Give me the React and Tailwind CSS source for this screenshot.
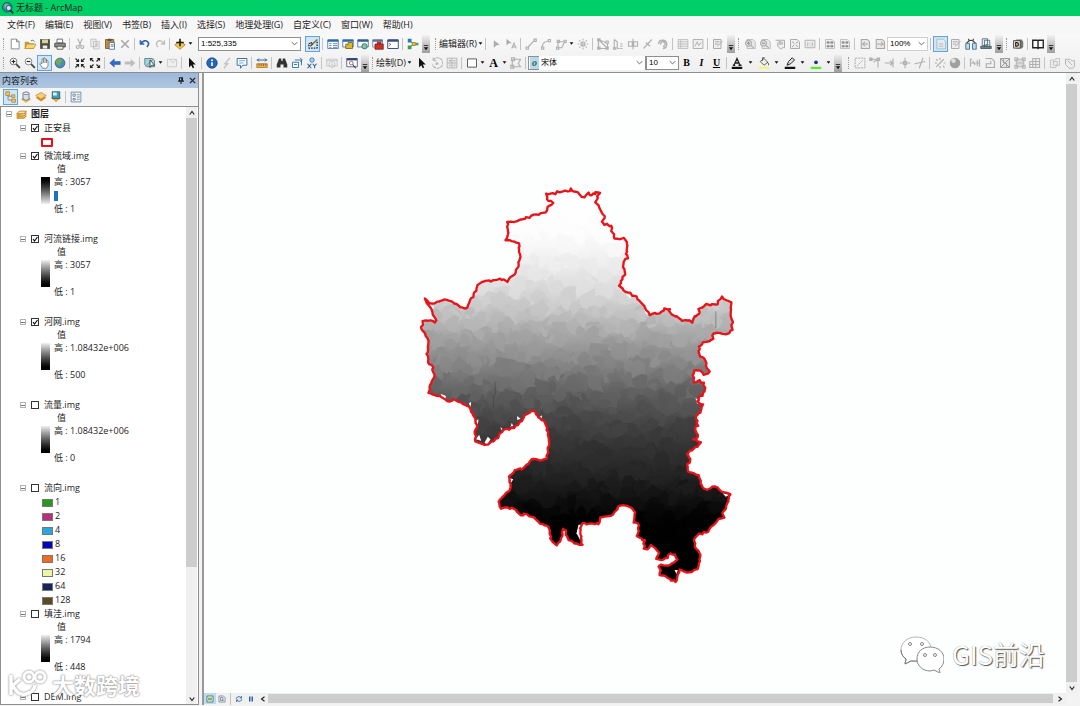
import { useState } from "react";
import clsx from "clsx";

const MENUS = ["文件(F)", "编辑(E)", "视图(V)", "书签(B)", "插入(I)", "选择(S)", "地理处理(G)", "自定义(C)", "窗口(W)", "帮助(H)"];

const LAYERS = [
  { name: "正安县", checked: true, kind: "outline" },
  { name: "微流域.img", checked: true, kind: "stretch", high: "3057", low: "1", inverted: true },
  { name: "河流链接.img", checked: true, kind: "stretch", high: "3057", low: "1" },
  { name: "河网.img", checked: true, kind: "stretch", high: "1.08432e+006", low: "500" },
  { name: "流量.img", checked: false, kind: "stretch", high: "1.08432e+006", low: "0" },
  {
    name: "流向.img",
    checked: false,
    kind: "classes",
    classes: [
      ["1", "bg-[#259a1f]"],
      ["2", "bg-[#b8307c]"],
      ["4", "bg-[#27a8dc]"],
      ["8", "bg-[#0505b8]"],
      ["16", "bg-[#f26b1d]"],
      ["32", "bg-[#ebf7a4]"],
      ["64", "bg-[#17245c]"],
      ["128", "bg-[#5e4a22]"],
    ],
  },
  { name: "填洼.img", checked: false, kind: "stretch", high: "1794", low: "448" },
  { name: "DEM.img", checked: false, kind: "none" },
];

const S = { fill: "none", stroke: "#b0b0b0", strokeWidth: 1.5 };
const D = { fill: "none", stroke: "#222", strokeWidth: 1.5 };

// all glyphs are drawn on a 16x16 grid
const GLYPHS = {
  newDoc: <path d="M3 1.500h7l3.500 3.500v9.500H3zM10 1.500V5h3.500" fill="#fff" stroke="#5f6f7f" />,
  open: (
    <>
      <path d="M1 14V5h5l1.500 2H13v7z" fill="#c99a35" />
      <path d="M1 14l3-6h12l-3 6z" fill="#f7d673" stroke="#a77a20" strokeWidth=".8" />
      <path d="M9 4q3-3 5 1" fill="none" stroke="#3c79b8" strokeWidth="1.300" />
    </>
  ),
  save: (
    <>
      <path d="M1.500 1.500h13v13h-13z" fill="#4d4a3f" />
      <path d="M4 2h8v5H4z" fill="#d8cf9a" />
      <path d="M5 10h6v4H5z" fill="#eee" />
    </>
  ),
  print: (
    <>
      <path d="M4 1.500h7l1 5H4z" fill="#fff" stroke="#444" />
      <path d="M1 7h14v5H1z" fill="#8a8f94" stroke="#333" />
      <path d="M4 11h8v4H4z" fill="#f3efcf" stroke="#444" />
    </>
  ),
  cut: <path d="M5 1l4 9M11 1L7 10M5 10a2 2 0 1 0 .1 0M11 10a2 2 0 1 0 .1 0" {...S} />,
  copy: <path d="M2.500 1.500h7v10h-7zM6 4.500h7.500v10H6zM8 8h4M8 10.500h4" fill="#eee" stroke="#b5b5b5" />,
  paste: (
    <>
      <path d="M2 2h11v12H2z" fill="#c08a3e" stroke="#6d4a18" />
      <path d="M5 1h5v3H5z" fill="#555" />
      <path d="M7 6h7v9H7z" fill="#fff" stroke="#3a5f96" />
      <path d="M9 9h4M9 11h4" stroke="#3a5f96" />
    </>
  ),
  del: <path d="M3 3l10 10M13 3L3 13" fill="none" stroke="#a9a9a9" strokeWidth="2.200" />,
  undo: <path d="M2 3v5h5M2.500 7.500q5-6 9-2.500 3 3-1 7" fill="none" stroke="#2f63ad" strokeWidth="2.200" />,
  redo: <path d="M14 3v5H9M13.500 7.500q-5-6-9-2.500-3 3 1 7" fill="none" stroke="#bdbdbd" strokeWidth="1.800" />,
  addData: (
    <>
      <path d="M8 4l7 5-7 6-7-6z" fill="#f2c74c" stroke="#a8761a" />
      <path d="M8 1v10M3 6h10" stroke="#222" strokeWidth="2.200" />
    </>
  ),
  edit: (
    <>
      <path d="M2 13.500h12M2.500 9v4M13.500 5v8" stroke="#222" strokeWidth="1.800" strokeDasharray="2 1.500" />
      <path d="M6 9l8-7" stroke="#a06a20" strokeWidth="2.200" fill="none" />
      <path d="M2 8l4-2 1 3-3 2" fill="none" stroke="#222" strokeWidth="1.300" />
    </>
  ),
  table: (
    <>
      <path d="M1 2.500h14v11.500H1z" fill="#fff" stroke="#2f66ac" />
      <path d="M1 2h14v3H1z" fill="#2f66ac" />
      <path d="M3 7.500h3M3 10h3M3 12.500h3M8 7.500h6M8 10h6M8 12.500h6" stroke="#3d6ea8" />
    </>
  ),
  catalog: (
    <>
      <path d="M1 2.500h14v9.500H1z" fill="#fff" stroke="#2f66ac" />
      <path d="M1 2h14v3H1z" fill="#2f66ac" />
      <path d="M5 14V8l3 1V6h6v8z" fill="#d9bb2e" stroke="#6b5b10" />
    </>
  ),
  search: (
    <>
      <path d="M1 2.500h14v9.500H1z" fill="#fff" stroke="#2f5f90" />
      <path d="M1 2h14v3H1z" fill="#2f5f90" />
      <circle cx="10" cy="11" r="3.500" fill="#7fc5a0" stroke="#2c7a78" strokeWidth="1.300" />
    </>
  ),
  toolbox: (
    <>
      <path d="M1 2.500h13v9.500H1z" fill="#fff" stroke="#5a6f95" />
      <path d="M1 2h13v3H1z" fill="#5a6f95" />
      <path d="M4 8h11v7H4zM7 8V5.500h5V8" fill="#c83228" stroke="#7d1712" />
    </>
  ),
  python: (
    <>
      <path d="M1 2.500h14v11.500H1z" fill="#fff" stroke="#3a4f7c" strokeWidth="1.300" />
      <path d="M1 2h14v3H1z" fill="#3a4f7c" />
      <path d="M3 7l2 1.500L3 10" fill="none" stroke="#333" />
    </>
  ),
  model: (
    <>
      <path d="M4 4l5 4-5 4M9 8h4" fill="none" stroke="#444" />
      <path d="M1 1h5v5H1z" fill="#2d79b8" />
      <path d="M1 10h5v5H1z" fill="#38a04c" />
      <path d="M7 6h4v4H7z" fill="#f0cc39" stroke="#8c7112" />
      <circle cx="13.500" cy="8" r="2" fill="#45a75a" />
    </>
  ),
  pointerGray: <path d="M5 3v10l3-3 5-1z" fill="#aaa" />,
  pointerA: (
    <>
      <path d="M2 1v9l3-3h4z" fill="#aaa" />
      <path d="M9 14l3-7 3 7M10 12h4" {...S} />
    </>
  ),
  line: <path d="M4 12L12 4M1.500 12h3v3h-3zM12 1.500h3v3h-3z" {...S} />,
  arc: <path d="M3 12q0-7 8-8M2 12h3v3H2zM11 2h3v3h-3z" {...S} />,
  trace: <path d="M4 13V5h8M4 13h5l4-8M2 12h3v3H2zM3 3h3v3H3zM12 3h3v3h-3z" {...S} />,
  burst: <path d="M8 1v14M1 8h14M3 3l10 10M13 3L3 13M6 6h4v4H6z" {...S} strokeDasharray="2 1" />,
  poly: <path d="M2 2v12h12V7L2 2l12 12M1 1h3v3H1zM12 4h3v3h-3zM1 12h3v3H1zM12 12h3v3h-3z" {...S} />,
  steps: <path d="M3 2v12M7 5v9M3 2l4 3M7 14h3M11 8h3M11 11h3M11 14h3M2 13h3v2H2z" {...S} />,
  split: <path d="M8 1v14M2 5h5v6H2zM9 5h5v6H9z" {...S} />,
  slash: <path d="M2 14L13 2M5 6l6 5" {...S} />,
  rotate: <path d="M2 8a5.500 5.500 0 1 1 6 6M8 14l3-2M5 9a3 3 0 1 1 3 2" {...S} strokeWidth="1.800" />,
  grid: <path d="M1.500 2h13v12h-13zM1.500 5h13M1.500 8h13M1.500 11h13M5 2v12" fill="#eee" stroke="#b5b5b5" />,
  sketch: <path d="M1.500 2h13v12h-13zM4 11l3-6 2 5 3-4" fill="#f0f0f0" stroke="#aaa" strokeWidth="1.200" />,
  note: <path d="M2 2h10v12H2zM4 5h6M4 8h4M7 11l7-7" fill="#eee" stroke="#aaa" strokeWidth="1.300" />,
  pageZoom: (
    <>
      <path d="M4 2h8l3 3v9H4z" fill="#e8e8e8" stroke="#b0b0b0" />
      <circle cx="6" cy="7" r="4" fill="#ddd" stroke="#a0a0a0" strokeWidth="1.300" />
      <path d="M4 7h4M6 5v4M9 10l4 3" stroke="#909090" strokeWidth="1.300" />
    </>
  ),
  pageOut: (
    <>
      <path d="M4 2h8l3 3v9H4z" fill="#e8e8e8" stroke="#b0b0b0" />
      <circle cx="6" cy="7" r="4" fill="#ddd" stroke="#a0a0a0" strokeWidth="1.300" />
      <path d="M4 7h4M9 10l4 3" stroke="#909090" strokeWidth="1.300" />
    </>
  ),
  pageHand: <path d="M2 3h12v10h-3l-2 2-4-4V6M7 9V4M9 9V4M11 9V5" fill="#eee" stroke="#aaa" strokeWidth="1.300" />,
  pageFull: <path d="M2 2h9l3 3v9H2zM4 5l3 2M12 5L9 7M4 12l3-3M12 12L9 9" fill="#eee" stroke="#aaa" strokeWidth="1.300" />,
  pageOne: <path d="M1.500 3h13v10h-13zM5 6v5M8 7v1M8 10v1M11 6v5" fill="#eee" stroke="#b0b0b0" strokeWidth="1.300" />,
  pageIn: (
    <>
      <path d="M2 2h9l3 3v9H2z" fill="#eee" stroke="#b0b0b0" />
      <path d="M4 5h3v2H4zM9 5h3v2H9zM4 10h3v2H4zM9 10h3v2H9z" fill="#888" stroke="#999" />
    </>
  ),
  pageLeft: <path d="M3 2h8l3 3v9H3zM12 8H5l3-3M5 8l3 3" fill="#e8e8e8" stroke="#a8a8a8" strokeWidth="1.400" />,
  pageRight: <path d="M3 2h8l3 3v9H3zM4 8h8L9 5M12 8l-3 3" fill="#e8e8e8" stroke="#a8a8a8" strokeWidth="1.400" />,
  frame: <path d="M2.500 1.500H11l3 3v10H2.500zM5 8h6M5 11h6" fill="#e4ebf0" stroke="#a1adb5" />,
  frames: (
    <>
      <path d="M5 3V1M11 3V1M2 7q6-8 12 0" fill="none" stroke="#333" strokeWidth="1.500" />
      <path d="M1 7h5v8H1zM10 7h5v8h-5z" fill="#b9daf0" stroke="#2d587d" />
    </>
  ),
  pages: (
    <>
      <path d="M3 1h7v9H3zM6 3h7v9H6z" fill="#e7eef8" stroke="#3f5876" />
      <path d="M1 11h14v3H1z" fill="#6e7f8c" stroke="#3f4b55" />
      <path d="M7 8h5l-3 3z" fill="#55a34b" />
    </>
  ),
  cube: (
    <>
      <path d="M3 4l3-2h7l2 3v7l-2 2H6l-3-3z" fill="#777" />
      <path d="M2 3.500h9v10H2z" fill="#e4dfc9" stroke="#333" />
      <path d="M5 6v5h1.500q2-.5 2-2.500T6.500 6z" fill="none" stroke="#111" strokeWidth="1.500" />
    </>
  ),
  book: <path d="M1 3h6l1 1 1-1h6v10H9l-1 1-1-1H1zM8 4v10" fill="#fff" stroke="#222" strokeWidth="1.800" />,
  zoomIn: (
    <>
      <circle cx="6" cy="6" r="4.500" fill="#fff" stroke="#777" strokeWidth="1.300" />
      <path d="M3.500 6h5M6 3.500v5" stroke="#222" strokeWidth="1.600" />
      <path d="M9.500 9.500l5 5" stroke="#4a4a4a" strokeWidth="2.500" />
    </>
  ),
  zoomOut: (
    <>
      <circle cx="6" cy="6" r="4.500" fill="#fff" stroke="#888" strokeWidth="1.300" />
      <path d="M3.500 6h5" stroke="#222" strokeWidth="1.600" />
      <path d="M9.500 9.500l5 5" stroke="#4a4a4a" strokeWidth="2.500" />
    </>
  ),
  hand: <path d="M5 15l-4-6q1-2 3 0V3q1.500-1 2 0V1.500q1.500-1 2 0V3q1.500-1 2 0v2q2-1 2 1v6l-2 3zM6 3v5M8 3v5M10 4v4" fill="#fff" stroke="#666" />,
  globe: (
    <>
      <circle cx="8" cy="8" r="6.500" fill="#4a8cc4" stroke="#29527d" />
      <path d="M5 2q5 0 7 3l-3 2-1 4-4-1-2-4z" fill="#6fae52" />
    </>
  ),
  shrink: <path d="M2 2l4 4M3 6h3V3M14 2l-4 4M10 3v3h3M2 14l4-4M3 10h3v3M14 14l-4-4M13 10h-3v3" {...D} />,
  expand: <path d="M6 6L2 2M2 5V2h3M10 6l4-4M11 2h3v3M6 10l-4 4M2 11v3h3M10 10l4 4M14 11v3h-3" {...D} />,
  back: <path d="M1 8l6-5.500v3.500h8v4H7v3.500z" fill="#2f6bc4" stroke="#1e4b95" strokeWidth=".6" />,
  forward: <path d="M15 8L9 2.500V6H1v4h8v3.500z" fill="#bdbdbd" />,
  select: (
    <>
      <path d="M1 2h10l3 3v8H4L1 10z" fill="#a5d6dd" stroke="#3b7077" />
      <path d="M2 13L13 2" stroke="#777" />
      <path d="M8 4v10l2-3h4z" fill="#fff" stroke="#222" />
    </>
  ),
  clear: <path d="M2 3h12v10H2zM5 3l4 5 4-5" fill="#efefef" stroke="#c2c2c2" />,
  pointer: <path d="M4 1v13l3-3 2 4 2-1-2-4h4z" fill="#111" />,
  info: (
    <>
      <circle cx="8" cy="8" r="7" fill="#2465b5" stroke="#154785" />
      <path d="M8 7v5" stroke="#fff" strokeWidth="2.200" />
      <circle cx="8" cy="4.300" r="1.300" fill="#fff" />
    </>
  ),
  bolt: <path d="M12 1L5 9h4l-5 6" fill="none" stroke="#c4c4c4" strokeWidth="1.800" />,
  html: (
    <>
      <path d="M1.500 2h13v9H9l-3 4v-4H1.500z" fill="#fff" stroke="#37709c" strokeWidth="1.300" />
      <path d="M4 5h8M4 8h6" stroke="#4c8cba" />
    </>
  ),
  measure: (
    <>
      <path d="M1 4h14M4 2L2 4l2 2M12 2l2 2-2 2" fill="none" stroke="#2761a8" strokeWidth="1.300" />
      <path d="M1 9h14v5H1z" fill="#edb14c" stroke="#a8701c" />
      <path d="M4 9v3M7 9v3M10 9v3M13 9v3" stroke="#7d5417" />
    </>
  ),
  binoculars: <path d="M4 2h3v3h2V2h3l3 8v4h-5v-4H6v4H1v-4z" fill="#333" />,
  route: (
    <>
      <path d="M2 7h8v7H2z" fill="#fff" stroke="#3577b5" strokeWidth="1.300" />
      <path d="M5 4h9v7" fill="none" stroke="#3577b5" strokeWidth="1.300" />
      <path d="M12 1l3 3-3 2M4 10h4" fill="none" stroke="#3577b5" strokeWidth="1.300" />
    </>
  ),
  goXY: (
    <>
      <circle cx="8" cy="4" r="3" fill="#9fd0ee" stroke="#2f78b2" />
      <path d="M2 9l5 6M7 9l-5 6M9 9l2.500 3L14 9M11.500 12v3" fill="none" stroke="#255f97" strokeWidth="1.400" />
    </>
  ),
  clock: <path d="M1 3h14v9H1zM1 5h14M8 6a4 4 0 1 0 .1 0M8 8v3h2" fill="#eee" stroke="#bdbdbd" />,
  viewer: (
    <>
      <path d="M1 2h14v11H1z" fill="#fff" stroke="#30486b" />
      <path d="M1 1.500h14v3H1z" fill="#30486b" />
      <circle cx="7" cy="8" r="2.500" fill="none" stroke="#9a3b3b" />
      <path d="M9 10l4 5" stroke="#333" strokeWidth="1.500" />
    </>
  ),
  turn: <path d="M3 4a7 7 0 1 1-1 6M3 1v4h4M7 8h2v2H7z" {...S} strokeDasharray="4 1" />,
  nudge: <path d="M1.500 1.500h13v13h-13zM8 2v12M2 8h12M4 5h3M5.500 3.500v3M10 5h3M4 11h3M10 11h3" fill="#e8e8e8" stroke="#a8a8a8" />,
  rect: <path d="M2 2.500h12v11H2z" fill="#fff" stroke="#333" />,
  editVertex: <path d="M4 3h10l-3 6 3 4H3V7zM2 1h4v4H2zM1 11h4v4H1z" {...S} />,
  bucket: (
    <>
      <path d="M3 6l5-4 5 5-5 4z" fill="#f2f2e8" stroke="#333" />
      <path d="M12 7q3 1 2 4M6 5V1h3" fill="none" stroke="#333" />
      <path d="M1 13h14v3H1z" fill="#f6f08a" />
    </>
  ),
  pen: (
    <>
      <path d="M4 11l2-5 5-5 3 3-5 5z" fill="#ddd" stroke="#222" strokeWidth="1.300" />
      <path d="M1 13h14v3H1z" fill="#111" />
    </>
  ),
  marker: (
    <>
      <circle cx="8" cy="7" r="2.500" fill="#1c2d9c" />
      <path d="M1 13h14v3H1z" fill="#5bee1e" />
    </>
  ),
  fontColor: (
    <>
      <path d="M4 11L8 2l4 9M5.500 8h5M2.500 11h3M10 11h4" fill="none" stroke="#222" strokeWidth="1.700" />
      <path d="M1 13h14v3H1z" fill="#111" />
    </>
  ),
  dashBox: <path d="M1.500 1.500h13v13h-13zM4 12l8-8" fill="#f2f2f2" stroke="#aaa" strokeWidth="1.200" strokeDasharray="3 1" />,
  corner: <path d="M2 3h10v11M6 7l6-4M1 1.500h3v3H1zM11 1.500h3v3h-3z" {...S} />,
  extend: <path d="M1 8h11M12 2v12M8 5l4 3-4 3" {...S} />,
  cross: <path d="M8 1v14M1 8h14M6 6h4v4H6z" {...S} />,
  trim: <path d="M1 9l14-3M12 1L7 15" {...S} />,
  spark: <path d="M3 13L13 3M3 3l2 2M8 1v3M13 8h2M8 12v3M12 12l2 2M1 8h3" {...S} />,
  ball: (
    <>
      <circle cx="8" cy="8" r="7" fill="#a0a0a0" />
      <circle cx="6" cy="5" r="3" fill="#dedede" />
    </>
  ),
  align: <path d="M2 3v10M14 3v10M2 8h12M5 5l3 6M11 4v8M1 3h3" {...S} />,
  reshape: <path d="M2 2h8l4 4v8H3V9h5q3-1 0-4" fill="#eee" stroke="#aaa" strokeWidth="1.400" />,
  fixTopo: <path d="M2 2h12v12H2zM2 2l12 12M14 2L2 14M6 3v5M10 8v5" fill="#e4e4e4" stroke="#9e9e9e" strokeWidth="1.300" />,
  nodes: <path d="M3 3h10v10H3zM1 1h4v4H1zM11 1h4v4h-4zM1 11h4v4H1zM11 11h4v4h-4zM3 8h10" fill="#ddd" stroke="#aaa" />,
  mesh: <path d="M5 2h9v12H5zM1 6h13M1 10h13M9 2v12M1 6v8h4" {...S} />,
  blob: <path d="M2 4h6l1-2h5v9h-4l-1 3H2zM6 6h5v5H6z" fill="#eee" stroke="#b5b5b5" />,
  union: <path d="M2 3h6l2 2h4v8l-3 2H7l-5-5zM5 5l6 6" fill="#eee" stroke="#b5b5b5" strokeWidth="1.300" />,
  layers: (
    <>
      <path d="M1 7l4-4h10v8l-3 3H1z" fill="#e3a93d" />
      <path d="M1 7l4-4h10l-3 4zM1 10h11l3-4M1 13h11l3-3" fill="#fbe09a" stroke="#a16f17" />
    </>
  ),
  byOrder: (
    <>
      <path d="M4 4v8h6M4 7h6" fill="none" stroke="#777" />
      <path d="M1 1h5v5H1zM9 5h4v4H9zM9 11h5v4H9z" fill="#edc56c" stroke="#ae812e" />
    </>
  ),
  bySource: (
    <>
      <path d="M8 6l7 5-7 5-7-5z" fill="#f0be57" />
      <path d="M4 3q4-3 8 0v8q-4 3-8 0z" fill="#d5dfec" stroke="#53647b" />
      <ellipse cx="8" cy="3" rx="4" ry="1.600" fill="#fff" stroke="#53647b" />
    </>
  ),
  byVisible: (
    <>
      <path d="M1 9l7 5 7-5-7-4z" fill="#d98d2b" />
      <path d="M1 6l7 5 7-5-7-4z" fill="#f7cf79" stroke="#a87321" strokeWidth=".8" />
    </>
  ),
  bySelect: (
    <>
      <path d="M1 9l7 6 7-6-7-4z" fill="#e6a945" />
      <path d="M3 1h10v9H3z" fill="#39a3b5" stroke="#264d66" />
      <path d="M4 2h5v4H4z" fill="#d8f0f5" />
    </>
  ),
  options: <path d="M1.500 1.500h13v13h-13zM4 4h3v3H4zM4 10h3v2H4zM9 5h4M9 8h4M9 11h4" fill="#f5f8fc" stroke="#56718e" />,
  app: (
    <>
      <circle cx="7" cy="7" r="6.500" fill="#3b83a8" stroke="#1e4c67" />
      <path d="M3 4q4-3 6 0l-1 4-4 1z" fill="#7dc386" />
      <circle cx="9" cy="8" r="3.500" fill="#c6e8ec" stroke="#21495a" strokeWidth="1.200" />
      <path d="M11 11l4 4" stroke="#21374c" strokeWidth="2.400" />
    </>
  ),
  refresh: <path d="M2 8q1-5 7-5l4 3M13 2v4H9M14 8q-1 5-7 5l-4-3M3 14v-4h4" fill="none" stroke="#3569a8" strokeWidth="1.700" />,
  pause: <path d="M4 3h3v10H4zM9 3h3v10H9z" fill="#2c63ae" />,
  dataView: (
    <>
      <path d="M2 2h12v12H2z" fill="#fff" stroke="#3b5a4a" strokeWidth="1.500" />
      <path d="M4 5h8v6H4z" fill="#86b35c" />
    </>
  ),
  layoutView: <path d="M2 2h9l3 3v9H2zM5 5h5v6H5zM7 8l4 3" fill="#fff" stroke="#4b6179" strokeWidth="1.300" />,
};

function Glyph({ name, className = "size-3" }) {
  return (
    <svg viewBox="0 0 16 16" className={clsx("shrink-0", className)} aria-hidden="true">
      {GLYPHS[name]}
    </svg>
  );
}

function Tool({ name, active, children }) {
  return (
    <button
      type="button"
      aria-label={name}
      className={clsx(
        "flex h-4 w-[15px] shrink-0 items-center justify-center text-[9px] text-black",
        active && "bg-[#cfe5f8] outline outline-1 -outline-offset-1 outline-[#62a5de]"
      )}
    >
      {children || <Glyph name={name} />}
    </button>
  );
}

function Caret() {
  return (
    <svg viewBox="0 0 8 8" className="mx-px w-[5px] shrink-0" aria-hidden="true">
      <path d="M1 2h6L4 6z" fill="#111" />
    </svg>
  );
}

function Sep() {
  return <span className="mx-[2px] h-3 w-px shrink-0 bg-[#c3c3c3]" />;
}

function Grip() {
  return <span className="mr-[3px] ml-[3px] h-3 w-px shrink-0 border-l border-dotted border-[#999]" />;
}

function Overflow() {
  return (
    <button
      type="button"
      aria-label="工具栏选项"
      className="ml-[2px] flex h-[18px] w-2 shrink-0 items-end justify-center bg-linear-to-b from-[#f3f3f3] to-[#9e9e9e] pb-[2px]"
    >
      <svg viewBox="0 0 8 8" className="w-[6px]">
        <path d="M1 0h6v1H1zM1 3h6L4 7z" fill="#111" />
      </svg>
    </button>
  );
}

function Combo({ label, options, className, disabled }) {
  return (
    <span className={clsx("relative flex h-[14px] shrink-0 items-center border border-[#8f8f8f] bg-white", className)}>
      <select
        aria-label={label}
        disabled={disabled}
        className="h-full w-full appearance-none bg-transparent pl-[2px] font-['Liberation_Sans','Noto_Sans_CJK_SC',sans-serif] text-[8px] leading-3 text-black outline-none disabled:opacity-100"
      >
        {options.map((o) => (
          <option key={o}>{o}</option>
        ))}
      </select>
      <svg viewBox="0 0 10 10" className="pointer-events-none absolute right-[2px] w-[7px]">
        <path d="M1 3l4 4 4-4" fill="none" stroke="#666" strokeWidth="1.400" />
      </svg>
    </span>
  );
}

function Tools({ names }) {
  return names.map((n, i) => (n === "|" ? <Sep key={i} /> : n === "v" ? <Caret key={i} /> : <Tool key={i} name={n} />));
}

function StandardRow() {
  return (
    <div className="flex h-[19px] items-center overflow-hidden">
      <Grip />
      <div className="flex w-[191px] shrink-0 items-center">
        <Tools names={["newDoc", "open", "save", "print", "|", "cut", "copy", "paste", "del", "|", "undo", "redo", "|", "addData", "v"]} />
      </div>
      <Combo label="地图比例" options={["1:525,335"]} className="mr-1 w-[103px]" />
      <Tool name="edit" active />
      <Sep />
      <Tools names={["table", "catalog", "search", "toolbox", "python", "|", "model"]} />
      <Overflow />
      <span className="ml-[2px] flex items-center">
        <Grip />
      </span>
      <button type="button" className="flex w-[44px] shrink-0 items-center whitespace-nowrap">
        编辑器(R)
        <Caret />
      </button>
      <Tools
        names={["|", "pointerGray", "pointerA", "|", "line", "arc", "trace", "v", "burst", "|", "poly", "steps", "split", "slash", "rotate", "|", "grid", "sketch", "|", "note"]}
      />
      <Overflow />
      <Grip />
      <Tools names={["pageZoom", "pageOut", "pageHand", "pageFull", "pageOne", "|", "pageIn", "pageIn", "|", "pageLeft", "pageRight"]} />
      <Combo label="缩放" options={["100%"]} disabled className="w-[41px] border-[#cfcfcf]" />
      <Sep />
      <Tool name="frame" active />
      <Tools names={["note", "frames", "pages"]} />
      <Overflow />
      <Grip />
      <Tools names={["cube", "|", "book"]} />
      <Overflow />
    </div>
  );
}

function ToolsRow() {
  return (
    <div className="flex h-[19px] items-center overflow-hidden">
      <Grip />
      <Tools names={["zoomIn", "zoomOut"]} />
      <Tool name="hand" active />
      <Tools
        names={["globe", "|", "shrink", "expand", "|", "back", "forward", "|", "select", "v", "clear", "|", "pointer", "|", "info", "bolt", "html", "|", "measure", "|", "binoculars", "route", "goXY", "|", "clock", "|", "viewer"]}
      />
      <Overflow />
      <Grip />
      <button type="button" className="flex w-[38px] shrink-0 items-center whitespace-nowrap">
        绘制(D)
        <Caret />
      </button>
      <Tools names={["pointer", "turn", "nudge", "|", "rect", "v"]} />
      <Tool name="文本">
        <b className="font-['Liberation_Serif',serif] text-[12px]">A</b>
      </Tool>
      <Tools names={["v", "editVertex", "|"]} />
      <span className="flex h-[14px] w-[118px] shrink-0 items-center border border-[#8f8f8f] bg-white pl-px">
        <span className="flex h-3 w-[9px] shrink-0 items-center justify-center bg-[#b9d8ee] font-['Liberation_Serif',serif] text-[10px] font-bold text-[#176b55] italic">
          o
        </span>
        <Combo label="字体" options={["宋体"]} className="flex-1 border-0 bg-transparent" />
      </span>
      <Combo label="字号" options={["10"]} className="w-[33px]" />
      <Tool name="粗体">
        <b className="font-['Liberation_Serif',serif] text-[10px]">B</b>
      </Tool>
      <Tool name="斜体">
        <b className="font-['Liberation_Serif',serif] text-[10px] italic">I</b>
      </Tool>
      <Tool name="下划线">
        <b className="font-['Liberation_Serif',serif] text-[10px] underline">U</b>
      </Tool>
      <Tools names={["|", "fontColor"]} />
      <span className="ml-[3px] flex items-center gap-[2px]">
        <Caret />
        <Tool name="bucket" />
        <Caret />
        <Tool name="pen" />
        <Caret />
        <Tool name="marker" />
        <Caret />
      </span>
      <Overflow />
      <span className="ml-[3px] flex items-center">
        <Grip />
      </span>
      <Tools
        names={["dashBox", "corner", "extend", "cross", "trim", "|", "spark", "ball", "|", "align", "reshape", "fixTopo", "nodes", "mesh", "|", "blob", "union"]}
      />
    </div>
  );
}

function Expander() {
  return (
    <button type="button" aria-label="折叠" className="flex size-[6px] shrink-0 items-center justify-center border border-[#b3b3b3] bg-white">
      <span className="h-px w-1 bg-[#777]" />
    </button>
  );
}

function Layer({ layer }) {
  const [checked, setChecked] = useState(layer.checked);
  return (
    <li>
      <div className="flex h-[14px] items-center pl-[19px]">
        <Expander />
        <label className="ml-[5px] flex items-center gap-[5px] whitespace-nowrap">
          <span className="relative flex size-2">
            <input
              type="checkbox"
              checked={checked}
              onChange={(e) => setChecked(e.target.checked)}
              className="size-2 appearance-none border border-[#333] bg-white"
            />
            {checked && (
              <svg viewBox="0 0 8 8" className="pointer-events-none absolute inset-0">
                <path d="M2 4l1.500 2L6.500 2" fill="none" stroke="#111" strokeWidth="1.200" />
              </svg>
            )}
          </span>
          {layer.name}
        </label>
      </div>
      {layer.kind === "outline" && (
        <div className="flex h-[14px] items-center pl-10">
          <span className="h-[9px] w-3 rounded-[1px] border-2 border-[#e3121b]" />
        </div>
      )}
      {layer.kind === "stretch" && (
        <>
          <div className="h-3 pl-14 leading-3">值</div>
          <div className="flex h-[57px] gap-1 pl-10">
            <span
              className={clsx(
                "mt-[2px] h-[27px] w-[9px] from-[#f0f0f0] to-black",
                layer.inverted ? "bg-linear-to-t" : "bg-linear-to-b"
              )}
            />
            <div>
              <div className="leading-[14px]">高 : {layer.high}</div>
              <div className="flex h-[14px] items-center">{layer.inverted && <span className="h-[10px] w-1 bg-[#1c74c0]" />}</div>
              <div className="leading-3">低 : {layer.low}</div>
            </div>
          </div>
        </>
      )}
      {layer.classes?.map(([value, color]) => (
        <div key={value} className="flex h-[14px] items-center gap-[2px] pl-[41px]">
          <span className={clsx("mt-[2px] h-2 w-[11px] border border-[#777]", color)} />
          {value}
        </div>
      ))}
    </li>
  );
}

function VScroll({ thumb }) {
  return (
    <div className="flex w-[11px] shrink-0 flex-col bg-[#f0f0f0]">
      <button type="button" aria-label="向上" className="flex h-[11px] items-center justify-center">
        <svg viewBox="0 0 8 8" className="w-[6px]">
          <path d="M1 6l3-4 3 4" {...D} />
        </svg>
      </button>
      <div className="flex-1">
        <div className={clsx("bg-[#cdcdcd]", thumb)} />
      </div>
      <button type="button" aria-label="向下" className="flex h-[11px] items-center justify-center">
        <svg viewBox="0 0 8 8" className="w-[6px]">
          <path d="M1 2l3 4 3-4" {...D} />
        </svg>
      </button>
    </div>
  );
}

function Contents() {
  return (
    <aside className="flex w-[199px] shrink-0 flex-col border-r border-[#8e8e8e]">
      <header className="flex h-[15px] items-center bg-linear-to-b from-[#9db9da] to-[#adc5e0] pr-[2px] pl-[2px]">
        <h2 className="flex-1 text-[9px]">内容列表</h2>
        <button type="button" aria-label="固定" className="mr-[5px]">
          <svg viewBox="0 0 8 10" className="w-[6px]">
            <path d="M2 1h4v4H2zM0 5.500h8M4 6v4M5 1v4" {...D} />
          </svg>
        </button>
        <button type="button" aria-label="关闭">
          <svg viewBox="0 0 8 8" className="w-[7px]">
            <path d="M1 1l6 6M7 1L1 7" {...D} />
          </svg>
        </button>
      </header>
      <div className="flex h-[18px] items-center bg-[#f4f4f4] pl-[3px]">
        <Tool name="byOrder" active />
        <Tools names={["bySource", "byVisible", "bySelect", "|", "options"]} />
      </div>
      <div className="flex min-h-0 flex-1 border border-r-0 border-[#8e8e8e] bg-white pr-px">
        <div className="min-w-0 flex-1 overflow-hidden">
          <div className="flex h-[14px] items-center pl-[5px] font-bold">
            <Expander />
            <Glyph name="layers" className="mx-1 size-[11px]" />
            图层
          </div>
          <ul>
            {LAYERS.map((l) => (
              <Layer key={l.name} layer={l} />
            ))}
          </ul>
        </div>
        <VScroll thumb="h-[78%]" />
      </div>
    </aside>
  );
}

const BOUNDARY = `435,72 445,74 455,69 465,70 472,65 480,69 492,64 502,66 512,56 520,63 530,66 538,74 550,82 562,70 572,74 585,70
582,66 597,70 592,80 592,92 586,98 594,104 596,116 604,122 603,132 610,136 612,146 606,154 608,162 620,163 634,170 632,182
640,190 638,200 650,206 658,207 668,202 676,210 680,220 678,240 676,252 682,264 672,274 668,286 670,300 672,316 664,330
658,348 670,360 684,366 694,376 708,382 716,394 728,404 738,420 748,433 770,430 784,424 794,418 806,418 810,432 824,438
836,444 846,452 862,450 874,456 880,440 892,438 896,418 906,412 920,404 936,404 952,400 958,388 966,382 978,388 990,398
994,418 992,440 996,460 994,478 984,488 970,494 950,488 936,490 938,504 926,514 910,520 898,526 896,546 904,562 916,574
920,592 926,600 924,612 916,616 900,604 880,602 878,616 882,636 896,632 908,640 916,658 908,675 895,682 892,695 908,705
900,725 888,740 890,765 884,780 892,800 880,808 902,814 893,828 868,843 860,850 872,868 862,882 862,904 880,912 898,920
900,938 912,960 930,955 944,950 955,960 975,966 990,974 982,990 980,1008 966,1032 972,1040 955,1048 935,1065 924,1084
905,1090 890,1097 880,1114 884,1130 896,1145 902,1160 894,1190 878,1203 860,1206 838,1200 832,1222 824,1237 808,1228
796,1218 776,1214 780,1200 774,1186 796,1188 815,1180 830,1170 826,1156 808,1152 800,1162 782,1172 768,1168 776,1148
766,1135 750,1128 738,1138 730,1134 732,1112 710,1096 716,1064 700,1056 702,1028 690,1014 676,1004 655,1008 645,1025
625,1040 598,1042 596,1060 560,1062 542,1060 540,1080 544,1126 530,1122 500,1106 496,1080 486,1075 484,1100 470,1124
452,1114 450,1090 438,1068 420,1058 400,1045 378,1032 360,1034 345,1020 320,1012 300,1014 295,994 310,976 330,960
330,940 326,922 342,900 372,896 385,880 398,865 420,870 440,864 442,840 446,800 438,764 420,746 405,726 390,722 370,740
358,758 335,776 308,780 290,805 258,826 225,812 224,790 230,765 218,735 205,712 180,695 160,688 148,696 128,686 85,668
90,645 102,620 96,590 82,575 80,545 84,510 72,490 62,470 68,456 85,450 104,456 106,444 95,425 84,408 74,388 90,402
110,394 140,388 156,394 175,408 192,416 204,406 214,385 226,360 236,342 250,334 280,332 305,328 320,334 340,312 352,292
360,262 354,240 355,222 340,216 316,212 322,190 322,158 345,152 385,142 408,134 438,128 440,112 456,98 440,86`
  .split(/\s+/)
  .map((p) => p.split(",").map(Number));

// small slivers along the border that the raster does not cover
const SLIVERS = [
  "82,402 100,408 98,418 88,416",
  "676,372 694,376 688,386",
  "730,418 744,430 738,434",
  "804,420 812,424 810,434",
  "885,684 898,694 890,702",
  "868,846 884,830 890,834",
  "122,672 136,678 134,690 120,684",
  "205,700 212,696 210,712",
  "226,752 234,748 232,764",
  "226,808 236,794 242,812",
  "252,818 262,800 270,808 260,824",
  "302,780 300,770 306,778",
  "330,770 334,758 338,768",
  "350,750 350,738 360,746",
  "418,740 424,736 424,746",
  "328,924 338,928 332,938",
  "528,1090 534,1064 542,1064 540,1112",
  "880,1112 888,1094 892,1108",
  "822,1200 832,1200 828,1212",
  "966,970 986,974 976,980",
];

function rand(n) {
  const x = Math.sin(n * 127.1 + 311.7) * 43758.5453;
  return x - Math.floor(x);
}

function roughen(points) {
  const out = [];
  points.forEach(([x, y], i) => {
    const [nx, ny] = points[(i + 1) % points.length];
    const steps = Math.max(1, Math.round(Math.hypot(nx - x, ny - y) / 7));
    for (let s = 0; s < steps; s++) {
      const t = s / steps;
      const k = i * 17 + s;
      out.push(`${(x + (nx - x) * t + (rand(k) - 0.5) * 6).toFixed(1)},${(y + (ny - y) * t + (rand(k + 900) - 0.5) * 6).toFixed(1)}`);
    }
  });
  return out.join(" ");
}

const OUTLINE = roughen(BOUNDARY);

const RAMP = [[50, 255], [190, 253], [230, 247], [300, 233], [360, 219], [420, 198], [480, 172], [540, 150], [600, 126], [680, 93], [760, 68], [840, 50], [920, 35], [980, 20], [1040, 3], [1300, 0]];

function shade(y) {
  const i = Math.max(1, RAMP.findIndex(([ry]) => ry >= y));
  const [y0, g0] = RAMP[i - 1];
  const [y1, g1] = RAMP[i];
  return Math.round(g0 + ((g1 - g0) * (y - y0)) / (y1 - y0));
}

// sub-basins: irregular patches, each in the grey of a nearby height, painted from the top down
const BASINS = [];
for (let i = 0; i < 1500; i++) {
  const cx = 50 + rand(i * 3 + 1) * 960;
  const cy = 150 + (i / 1500) * 1100 + (rand(i * 7 + 2) - 0.5) * 50;
  const radius = 12 + rand(i * 5 + 3) * 18;
  const points = [];
  for (let k = 0; k < 9; k++) {
    const angle = (k / 9) * Math.PI * 2;
    const reach = radius * (0.6 + rand(i * 13 + k * 29) * 0.7);
    points.push(`${(cx + Math.cos(angle) * reach).toFixed(1)},${(cy + Math.sin(angle) * reach).toFixed(1)}`);
  }
  const g = shade(Math.min(1290, Math.max(60, cy + (rand(i * 19 + 4) - 0.5) * 46)));
  BASINS.push({ points: points.join(" "), fill: `rgb(${g},${g},${g})` });
}

function MapCanvas() {
  return (
    <div className="relative min-h-0 flex-1 bg-[#fdfefe]">
      <svg viewBox="0 0 861 620" preserveAspectRatio="xMidYMid meet" className="block size-full" role="img" aria-label="正安县 微流域">
        <defs>
          <clipPath id="county">
            <polygon points={OUTLINE} />
          </clipPath>
          <linearGradient id="ramp" gradientUnits="userSpaceOnUse" x1="0" y1="50" x2="0" y2="1300">
            {RAMP.map(([y, g]) => (
              <stop key={y} offset={(y - 50) / 1250} stopColor={`rgb(${g},${g},${g})`} />
            ))}
          </linearGradient>
        </defs>
        <g transform="translate(196 97) scale(.33333)">
          <g clipPath="url(#county)">
            <rect x="0" y="0" width="1050" height="1275" fill="url(#ramp)" />
            <g opacity=".75">
              {BASINS.map((b, i) => (
                <polygon key={i} points={b.points} fill={b.fill} />
              ))}
            </g>
            <path d="M284 635v40M279 675v40M946 424v50" fill="none" stroke="#333" strokeOpacity=".3" strokeWidth="4" />
            {SLIVERS.map((s) => (
              <polygon key={s} points={s} fill="#fff" />
            ))}
          </g>
          <polygon points={OUTLINE} fill="none" stroke="#e8141a" strokeWidth="7" strokeLinejoin="round" />
        </g>
      </svg>
      <div className="absolute right-[21px] bottom-5 flex items-center gap-2">
        <svg viewBox="0 0 44 38" className="w-11">
          <path d="M16 2C7 2 1 8 1 15c0 4 2 7 5 9l-1 5 6-3c9 2 20-2 20-12C31 7 25 2 16 2z" fill="#fff" stroke="#b5b5b5" />
          <path d="M1 15c0 4 2 7 5 9l-1 5 6-3h6" fill="none" stroke="#777" />
          <path d="M30 12c-8 0-13 5-13 12s6 12 13 12l4-1 6 3-1-4c3-2 5-6 5-10 0-7-6-12-14-12z" fill="#fff" stroke="#888" />
          <g fill="#fff" stroke="#888">
            <circle cx="10" cy="9" r="1.500" />
            <circle cx="22" cy="9" r="1.500" />
            <circle cx="25" cy="20" r="1.500" />
            <circle cx="35" cy="20" r="1.500" />
          </g>
        </svg>
        <span className="font-['Noto_Sans_CJK_SC',sans-serif] text-[26px] leading-8 text-white [text-shadow:1px_1px_1px_#555,0_0_1px_#888]">
          GIS前沿
        </span>
      </div>
    </div>
  );
}

function ViewBar() {
  return (
    <div className="flex h-[11px] items-center bg-[#f0f0f0]">
      <button type="button" aria-label="数据视图" className="flex h-[11px] w-3 items-center justify-center bg-[#b7dcf5]">
        <Glyph name="dataView" className="size-2" />
      </button>
      <button type="button" aria-label="布局视图" className="flex w-3 justify-center">
        <Glyph name="layoutView" className="size-2" />
      </button>
      <Sep />
      <button type="button" aria-label="刷新" className="flex w-3 justify-center">
        <Glyph name="refresh" className="size-2" />
      </button>
      <button type="button" aria-label="暂停" className="flex w-3 justify-center">
        <Glyph name="pause" className="size-2" />
      </button>
      <button type="button" aria-label="向左" className="flex w-[11px] justify-center">
        <svg viewBox="0 0 8 8" className="w-[6px]">
          <path d="M6 1L2 4l4 3" {...D} />
        </svg>
      </button>
      <div className="h-[9px] flex-1 bg-[#cdcdcd]" />
      <button type="button" aria-label="向右" className="flex w-[13px] justify-center">
        <svg viewBox="0 0 8 8" className="w-[6px]">
          <path d="M2 1l4 3-4 3" {...D} />
        </svg>
      </button>
    </div>
  );
}

export default function App() {
  return (
    <div className="relative flex h-screen flex-col overflow-hidden bg-[#f3f3f3] font-['Open_Sans','Noto_Sans_CJK_SC',sans-serif] text-[9px] leading-3 text-[#1c1c1c]">
      <header className="flex h-4 shrink-0 items-center gap-[2px] bg-[#00cf67] pl-[2px]">
        <Glyph name="app" />
        <h1 className="text-[9px]">无标题 - ArcMap</h1>
      </header>
      <nav className="flex h-[18px] shrink-0 items-center gap-[10px] bg-[#f7f7f7] pl-[7px]">
        {MENUS.map((m) => (
          <button type="button" key={m} className="whitespace-nowrap">
            {m}
          </button>
        ))}
      </nav>
      <div className="shrink-0 bg-linear-to-b from-[#f9f9f9] to-[#efefef]">
        <StandardRow />
        <ToolsRow />
      </div>
      <main className="flex min-h-0 flex-1 gap-[3px] border-t border-[#8e8e8e] pb-px">
        <Contents />
        <section className="flex min-w-0 flex-1 border-l-2 border-[#999] pr-[3px] pb-px">
          <div className="flex min-w-0 flex-1 flex-col">
            <MapCanvas />
            <ViewBar />
          </div>
          <div className="flex pb-[11px]">
            <VScroll thumb="h-full" />
          </div>
        </section>
      </main>
      <div className="pointer-events-none absolute bottom-2 left-2 flex items-center gap-1">
        <svg viewBox="0 0 40 28" className="w-10 drop-shadow-[0_0_1px_#777]">
          <path d="M3 5v20M3 17l9-8M5 16q5 10 13 8 8-2 9-9" fill="none" stroke="#fff" strokeWidth="3.500" />
          <circle cx="21" cy="7" r="5" fill="none" stroke="#fff" strokeWidth="3" />
          <circle cx="32" cy="7" r="5" fill="none" stroke="#fff" strokeWidth="3" />
        </svg>
        <span className="font-['Noto_Sans_CJK_SC',sans-serif] text-[22px] leading-6 font-bold text-white [text-shadow:0_0_2px_#777,0_0_1px_#999]">
          大数跨境
        </span>
      </div>
    </div>
  );
}
